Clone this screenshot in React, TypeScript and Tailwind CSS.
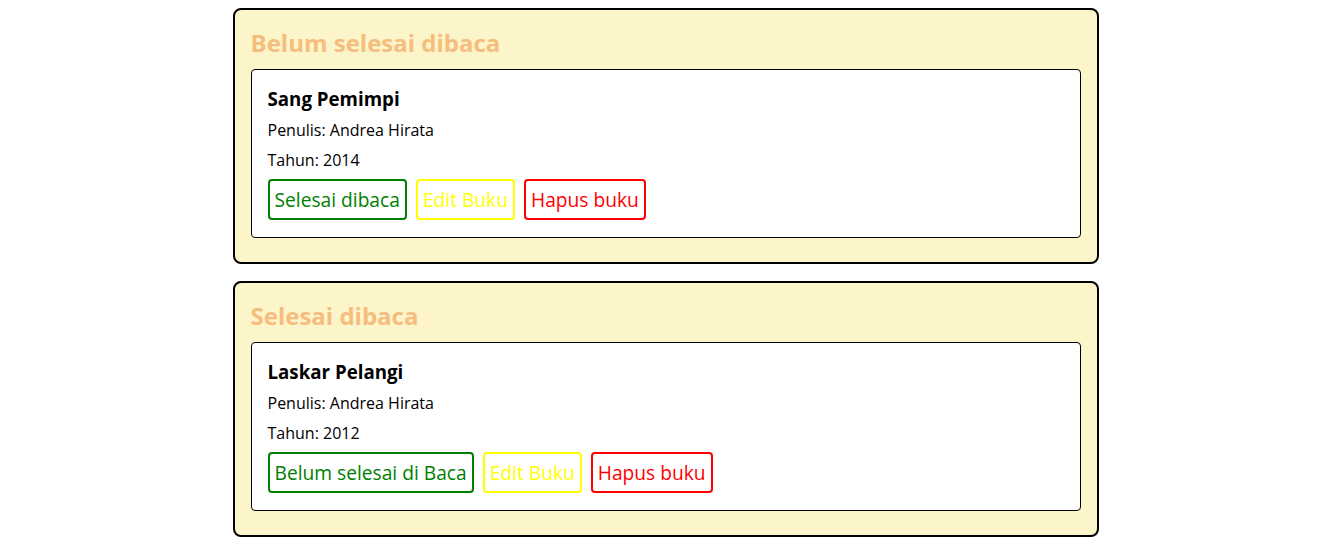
type Book = {
  id: number;
  title: string;
  author: string;
  year: number;
};

const unread: Book[] = [{ id: 1, title: "Sang Pemimpi", author: "Andrea Hirata", year: 2014 }];
const read: Book[] = [{ id: 2, title: "Laskar Pelangi", author: "Andrea Hirata", year: 2012 }];

function BookItem({ book, toggleLabel }: { book: Book; toggleLabel: string }) {
  return (
    <article className="border border-black rounded-[4px] bg-white p-4 pb-[17px] mb-2">
      <h3 className="text-[18.72px] font-bold leading-[26px] mb-[6px]">{book.title}</h3>
      <p className="text-[16px] leading-[24px] mb-[6px]">Penulis: {book.author}</p>
      <p className="text-[16px] leading-[24px] mb-[7px]">Tahun: {book.year}</p>
      <div className="flex gap-[9px]">
        <button className="h-[41px] px-[5px] pt-[2px] border-2 border-[#008000] text-[#008000] rounded-[4px] text-[19.2px]">
          {toggleLabel}
        </button>
        <button className="h-[41px] px-[5px] pt-[2px] border-2 border-[#ffff00] text-[#ffff00] rounded-[4px] text-[19.2px]">
          Edit Buku
        </button>
        <button className="h-[41px] px-[5px] pt-[2px] border-2 border-[#ff0000] text-[#ff0000] rounded-[4px] text-[19.2px]">
          Hapus buku
        </button>
      </div>
    </article>
  );
}

function Shelf({ title, books, toggleLabel }: { title: string; books: Book[]; toggleLabel: string }) {
  return (
    <section className="w-[866px] border-2 border-black rounded-[8px] bg-[#fcf5c9] p-4">
      <h2 className="text-[24px] font-bold leading-[34px] text-[#f5bd7e] mb-[9px]">{title}</h2>
      {books.map((b) => (
        <BookItem key={b.id} book={b} toggleLabel={toggleLabel} />
      ))}
    </section>
  );
}

export default function App() {
  return (
    <main
      className="flex flex-col items-center gap-[17px] pt-2 bg-white text-black min-h-screen"
      style={{ fontFamily: '"Open Sans", sans-serif' }}
    >
      <Shelf title="Belum selesai dibaca" books={unread} toggleLabel="Selesai dibaca" />
      <Shelf title="Selesai dibaca" books={read} toggleLabel="Belum selesai di Baca" />
    </main>
  );
}
